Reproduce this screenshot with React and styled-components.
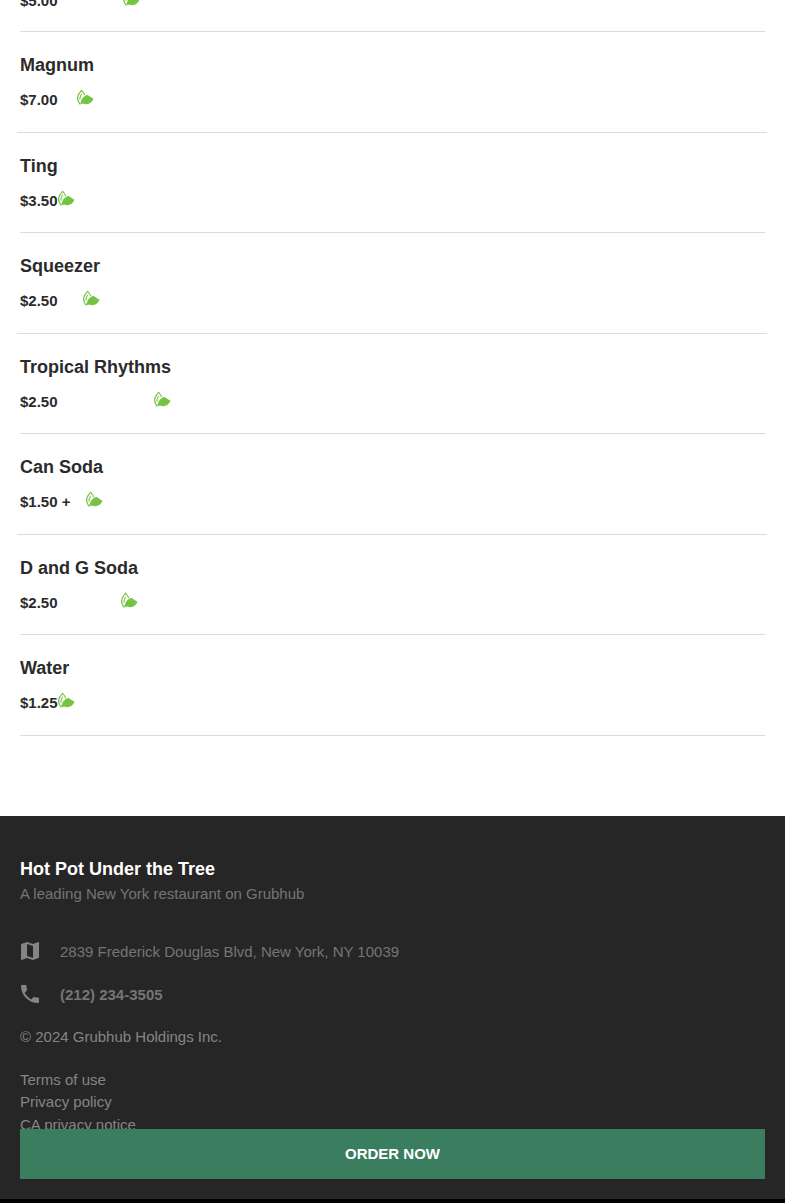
import styled, { createGlobalStyle } from 'styled-components'
import { MdMap, MdLocalPhone } from 'react-icons/md'

const items = [
    { name: 'Magnum', price: '$7.00', wide: true },
    { name: 'Ting', price: '$3.50' },
    { name: 'Squeezer', price: '$2.50', wide: true },
    { name: 'Tropical Rhythms', price: '$2.50' },
    { name: 'Can Soda', price: '$1.50 +', wide: true },
    { name: 'D and G Soda', price: '$2.50' },
    { name: 'Water', price: '$1.25' },
]

function Leaf() {
    return (
        <LeafIcon viewBox="1 0 17 18">
            <path d="M5.6 1.4C3.4 3.6 1.6 6.4 1.6 9.2c0 2 .9 3.6 2.2 5.6" fill="none" stroke="#74c442" strokeWidth="1.3" strokeLinecap="round" />
            <path d="M5.6 1.4C7 2.8 8 4.2 8.6 5.8M5.4 5.2C4.4 6.8 3.8 8.4 4 10.2" fill="none" stroke="#74c442" strokeWidth="1.1" strokeLinecap="round" />
            <path d="M4.4 15.4C4.8 10.4 7.6 6.6 11.6 6c2 1.2 4 2.6 5.9 3.8-1.3 3.2-4 5.3-7.2 5.5-1.2.1-2.2-.3-3.2-.7-.9.4-1.8.7-2.7.8z" fill="#74c442" />
        </LeafIcon>
    )
}

export default function App() {
    return (
        <>
            <GlobalStyle />
            <Page>
                <Menu>
                    <CutRow>
                        <Prices $cut>
                            <Price>$5.00</Price>
                            <Leaf />
                        </Prices>
                    </CutRow>
                    {items.map(item => (
                        <Row key={item.name} $wide={item.wide}>
                            <Info>
                                <Name>{item.name}</Name>
                                <Prices>
                                    <Price>{item.price}</Price>
                                    <Leaf />
                                </Prices>
                            </Info>
                        </Row>
                    ))}
                </Menu>
                <Footer>
                    <Title>Hot Pot Under the Tree</Title>
                    <Tagline>A leading New York restaurant on Grubhub</Tagline>
                    <Contact>
                        <ContactIcon><MdMap /></ContactIcon>
                        <span>2839 Frederick Douglas Blvd, New York, NY 10039</span>
                    </Contact>
                    <Contact $bold>
                        <ContactIcon><MdLocalPhone /></ContactIcon>
                        <span>(212) 234-3505</span>
                    </Contact>
                    <Copyright>© 2024 Grubhub Holdings Inc.</Copyright>
                    <Links>
                        <FooterLink>Terms of use</FooterLink>
                        <FooterLink>Privacy policy</FooterLink>
                        <FooterLink>CA privacy notice</FooterLink>
                    </Links>
                </Footer>
            </Page>
            <OrderButton>ORDER NOW</OrderButton>
        </>
    )
}

const GlobalStyle = createGlobalStyle`
    html, body {
        margin: 0;
        background: #000;
        overflow: hidden;
    }
    * {
        box-sizing: border-box;
    }
`

const Page = styled.div`
    height: 1203px;
    overflow: hidden;
    font-family: "Liberation Sans", Arial, sans-serif;
`

const Menu = styled.div`
    background: #fff;
    height: 816px;
    padding: 0 20px;
`

const CutRow = styled.div`
    height: 32px;
    border-bottom: 1px solid #dcdcdc;
    display: flex;
    align-items: flex-end;
    padding-bottom: 19px;
`

const Row = styled.div`
    height: 100.5px;
    padding-top: 20px;
    border-bottom: 1px solid #dcdcdc;
    margin: ${p => p.$wide ? '0 -2px 0 -3px' : '0'};
    padding-left: ${p => p.$wide ? '3px' : '0'};
`

const Info = styled.div`
    display: inline-flex;
    flex-direction: column;
`

const Name = styled.div`
    font-size: 18px;
    line-height: 26px;
    font-weight: 700;
    color: #2b2b2b;
`

const Prices = styled.div`
    display: flex;
    justify-content: space-between;
    align-items: flex-start;
    height: 22px;
    margin-top: 11.25px;
    width: ${p => p.$cut ? '120px' : 'auto'};
    flex-shrink: 0;
`

const Price = styled.span`
    font-size: 15px;
    line-height: 22px;
    font-weight: 700;
    color: #2b2b2b;
`

const LeafIcon = styled.svg`
    width: 17px;
    height: 18px;
    flex-shrink: 0;
`

const Footer = styled.footer`
    height: 383px;
    background: #262626;
    padding: 42px 20px 0;
`

const Title = styled.div`
    font-size: 18px;
    line-height: 22px;
    font-weight: 700;
    color: #fff;
`

const Tagline = styled.div`
    margin-top: 3px;
    font-size: 15px;
    line-height: 22px;
    color: #757575;
`

const Contact = styled.div`
    display: flex;
    align-items: center;
    height: 24px;
    margin-top: ${p => p.$bold ? '19px' : '34px'};
    font-size: 15px;
    color: #757575;
    font-weight: ${p => p.$bold ? 700 : 400};
`

const ContactIcon = styled.span`
    display: flex;
    width: 40px;
    svg {
        width: 24px;
        height: 24px;
        margin-left: -2px;
        color: #858585;
    }
`

const Copyright = styled.div`
    margin-top: 20px;
    font-size: 15px;
    line-height: 22px;
    color: #858585;
`

const Links = styled.div`
    margin-top: 20.9px;
    display: flex;
    flex-direction: column;
`

const FooterLink = styled.a`
    font-size: 15px;
    line-height: 22.5px;
    color: #858585;
`

const OrderButton = styled.button`
    position: fixed;
    left: 20px;
    right: 20px;
    top: 1129px;
    height: 50px;
    padding: 0 0 2px;
    border: 0;
    background: #3a7d5f;
    color: #fff;
    font-family: "Liberation Sans", Arial, sans-serif;
    font-size: 15px;
    font-weight: 700;
`
